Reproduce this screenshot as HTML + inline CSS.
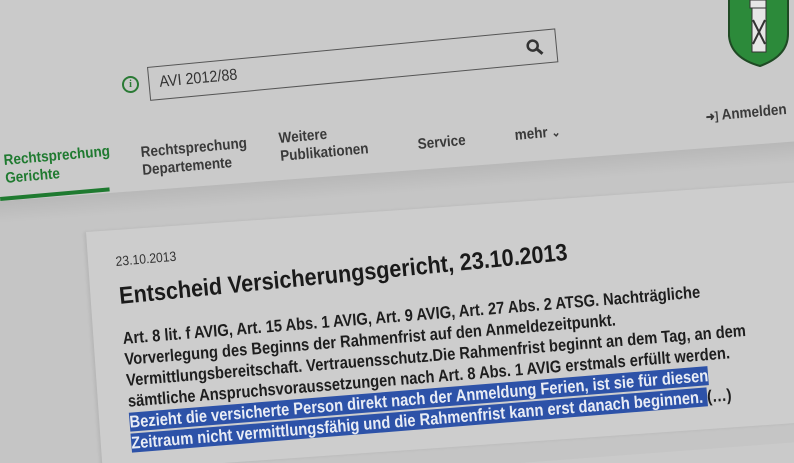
<!DOCTYPE html>
<html><head><meta charset="utf-8"><style>
html,body{margin:0;padding:0;overflow:hidden;width:794px;height:463px}
body{background:#cacaca;font-family:"Liberation Sans",sans-serif;color:#2a2a2a}
#w{position:relative;width:794px;height:463px;overflow:hidden}
.r{position:absolute;transform-origin:0 0;transform:rotate(-5deg) scaleX(.9);white-space:nowrap}
.nav{font-size:15px;line-height:18px;color:#3a3a3a;font-weight:bold}
</style></head><body><div id="w">
<div style="position:absolute;left:-50px;top:205px;width:900px;height:300px;background:#c5c5c5;transform-origin:0 0;transform:rotate(-4.3deg)"></div>
<div style="position:absolute;left:-50px;top:205px;width:900px;height:22px;background:linear-gradient(#b8b8b8,#c5c5c5);transform-origin:0 0;transform:rotate(-4.3deg)"></div>
<div style="position:absolute;left:86px;top:232px;width:720px;height:240px;background:#cdcdcd;transform-origin:0 0;transform:rotate(-4deg);box-shadow:-2px 0 3px rgba(0,0,0,.08)"></div>

<svg style="position:absolute;left:726px;top:-4px" width="66" height="72" viewBox="0 0 66 72">
<path d="M3 2 L62 0 L62 38 Q62 60 34 70 Q5 62 3 40 Z" fill="#2c8a3a" stroke="#1f4a24" stroke-width="2"/>
<rect x="26" y="12" width="14" height="44" fill="#e6e6e6" stroke="#333" stroke-width="1"/>
<path d="M27 24 L39 48 M39 24 L27 48" stroke="#333" stroke-width="2"/>
<rect x="24" y="4" width="16" height="8" fill="#e6e6e6" stroke="#333"/>
</svg>

<div style="position:absolute;left:122px;top:76px;width:13px;height:13px;border:2px solid #2a7a35;border-radius:50%;font:bold 10px/13px 'Liberation Serif',serif;color:#2a7a35;text-align:center">i</div>

<div style="position:absolute;transform-origin:0 0;left:147px;top:67px;width:410px;height:34px;border:1px solid #555;box-sizing:border-box;transform:rotate(-5.4deg)">
<span style="position:absolute;left:10px;top:7px;font-size:16px;color:#333;transform:scaleX(.9);transform-origin:0 0">AVI 2012/88</span>
<svg style="position:absolute;right:12px;top:7px" width="18" height="18" viewBox="0 0 18 18"><circle cx="7" cy="7" r="5" fill="none" stroke="#333" stroke-width="2.5"/><path d="M11 11 L16 16" stroke="#333" stroke-width="3"/></svg>
</div>

<div class="r nav" style="left:3px;top:152px;color:#1f7a30">Rechtsprechung<br>Gerichte</div>
<div class="r" style="left:0;top:197px;width:122px;height:4px;background:#1f7a30"></div>
<div class="r nav" style="left:140px;top:144px">Rechtsprechung<br>Departemente</div>
<div class="r nav" style="left:278px;top:130px">Weitere<br>Publikationen</div>
<div class="r nav" style="left:417px;top:136px">Service</div>
<div class="r nav" style="left:514px;top:127px">mehr <span style="font-size:12px">&#8964;</span></div>
<div class="r nav" style="left:705px;top:108px"><span style="font-size:12px">&#10140;]</span> Anmelden</div>

<div class="r" style="left:115px;top:254px;font-size:13.5px;color:#333">23.10.2013</div>
<div class="r" style="left:118px;top:283px;font-size:24px;font-weight:bold;color:#1a1a1a;transform:rotate(-5.6deg) scaleX(.9)">Entscheid Versicherungsgericht, 23.10.2013</div>
<div class="r" style="left:122px;top:328px;font-size:17px;line-height:21px;font-weight:bold;color:#1e1e1e;transform:rotate(-4.6deg) scaleX(.865)">
Art. 8 lit. f AVIG, Art. 15 Abs. 1 AVIG, Art. 9 AVIG, Art. 27 Abs. 2 ATSG. Nachträgliche<br>
Vorverlegung des Beginns der Rahmenfrist auf den Anmeldezeitpunkt.<br>
Vermittlungsbereitschaft. Vertrauensschutz.Die Rahmenfrist beginnt an dem Tag, an dem<br>
sämtliche Anspruchsvoraussetzungen nach Art. 8 Abs. 1 AVIG erstmals erfüllt werden.<br>
<span style="background:#2d52a8;color:#e8ecf5">Bezieht die versicherte Person direkt nach der Anmeldung Ferien, ist sie für diesen</span><br>
<span style="background:#2d52a8;color:#e8ecf5">Zeitraum nicht vermittlungsfähig und die Rahmenfrist kann erst danach beginnen. </span>(…)
</div>
</div></body></html>
